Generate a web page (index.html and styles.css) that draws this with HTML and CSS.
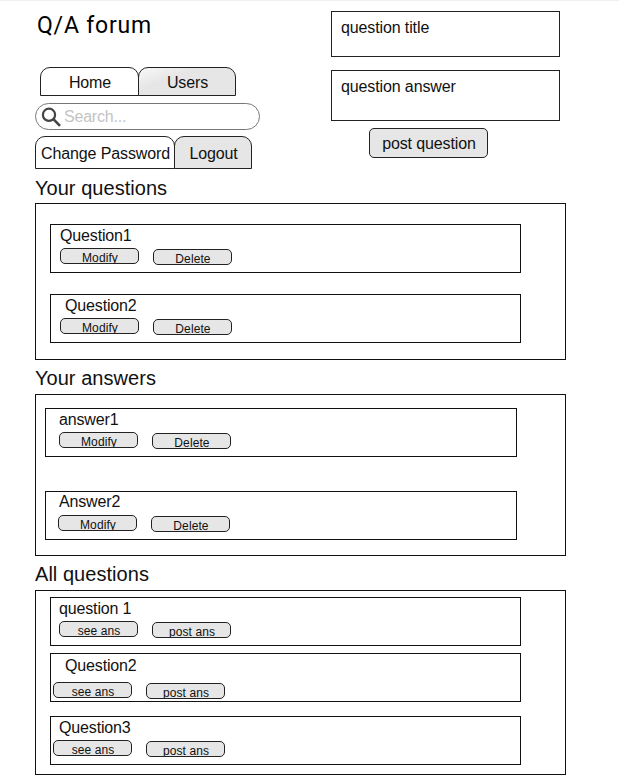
FILE: index.html
```html
<!DOCTYPE html>
<html lang="en">
<head>
<meta charset="utf-8">
<title>Q/A forum</title>
<link rel="stylesheet" href="styles.css">
</head>
<body>
<header class="top">
  <div class="top-left">
    <h1>Q/A forum</h1>
    <nav class="tabs main-tabs">
      <a class="tab">Home</a>
      <a class="tab active shine">Users</a>
    </nav>
    <label class="search">
      <svg width="21" height="21" viewBox="0 0 21 21" fill="none" stroke="#444"><circle cx="8" cy="7.8" r="6.1" stroke-width="2.2"/><path d="M12.4 12.2 19 18.8" stroke-width="2.6"/></svg>
      <span>Search...</span>
    </label>
    <nav class="tabs account-tabs">
      <a class="tab">Change Password</a>
      <a class="tab active">Logout</a>
    </nav>
  </div>
  <form class="ask">
    <div class="field field-title">question title</div>
    <div class="field field-answer">question answer</div>
    <button type="button" class="post">post question</button>
  </form>
</header>
<main>
  <h2>Your questions</h2>
  <section class="panel own-questions">
    <article class="card"><h3>Question1</h3><div class="actions"><button>Modify</button><button>Delete</button></div></article>
    <article class="card indented"><h3>Question2</h3><div class="actions"><button>Modify</button><button>Delete</button></div></article>
  </section>
  <h2>Your answers</h2>
  <section class="panel own-answers">
    <article class="card"><h3>answer1</h3><div class="actions"><button>Modify</button><button>Delete</button></div></article>
    <article class="card second"><h3>Answer2</h3><div class="actions"><button>Modify</button><button>Delete</button></div></article>
  </section>
  <h2>All questions</h2>
  <section class="panel all-questions">
    <article class="card"><h3>question 1</h3><div class="actions"><button>see ans</button><button>post ans</button></div></article>
    <article class="card indented"><h3>Question2</h3><div class="actions"><button>see ans</button><button>post ans</button></div></article>
    <article class="card third"><h3>Question3</h3><div class="actions"><button>see ans</button><button>post ans</button></div></article>
  </section>
</main>
</body>
</html>
```
FILE: styles.css
```css
* { box-sizing: border-box; }
body {
  margin: 0;
  height: 778px;
  overflow: hidden;
  background: #fff;
  border-top: 1px solid #f0f0f0;
  color: #111;
  font: 16px/18px "Liberation Sans", Arial, sans-serif;
  letter-spacing: -0.12px;
}
h1, h2, h3 { margin: 0; font-weight: 400; }
button { font-family: inherit; color: inherit; margin: 0; letter-spacing: inherit; }

.top { display: flex; height: 176px; padding-left: 35px; }
.top-left { width: 296px; }
h1 {
  margin: 11px 0 0 2px;
  height: 27px;
  font: 400 23px/28px Roboto, sans-serif;
  letter-spacing: 0.8px;
  color: #000;
}
.tabs { display: flex; }
.tab {
  display: flex;
  align-items: center;
  justify-content: center;
  border: 1px solid #222;
  border-radius: 10px 10px 0 0;
  white-space: nowrap;
}
.tab + .tab { margin-left: -1px; }
.active { background: #e6e6e6; }
.shine { background: linear-gradient(160deg, #f8f8f8, #e6e6e6 35%); }
.main-tabs { margin: 28px 0 0 5px; height: 29px; }
.main-tabs .tab { width: 99px; padding: 3px 0 0 1px; }
.main-tabs .active { width: 98px; }
.search {
  display: flex;
  margin-top: 7px;
  width: 225px;
  height: 27px;
  padding: 3px 0 0 5px;
  border: 1px solid #777;
  border-radius: 14px;
  color: #c4c4c4;
}
.search span { margin: 1px 0 0 2px; letter-spacing: -0.2px; }
.account-tabs { margin-top: 6px; height: 33px; }
.account-tabs .tab { width: 140px; padding: 3px 0 0 1px; }
.account-tabs .tab.active { width: 78px; }

.ask { width: 229px; }
.field { border: 1px solid #222; padding-left: 9px; }
.field-title { margin-top: 10px; height: 46px; padding-top: 7px; }
.field-answer { margin-top: 13px; height: 51px; padding-top: 7px; }
.post {
  display: block;
  margin: 7px 0 0 38px;
  width: 119px;
  height: 30px;
  padding: 1px 0 0 1px;
  border: 1px solid #222;
  border-radius: 5px;
  background: #e6e6e6;
  font-size: 16px;
}

main { padding-left: 35px; }
h2 { height: 26px; font-size: 20px; line-height: 23px; letter-spacing: 0.04px; }
.panel { width: 531px; border: 1px solid #111; }
.card { width: 471px; height: 49px; border: 1px solid #111; }
.card h3 { font-size: 16px; line-height: 18px; margin: 2px 0 0 9px; letter-spacing: -0.15px; }
.actions { display: flex; gap: 14px; margin: 3px 0 0 9px; }
.actions button {
  width: 79px;
  height: 16px;
  padding: 2px 0 0 1px;
  overflow: hidden;
  border: 1px solid #222;
  border-radius: 5px;
  background: #e6e6e6;
  font-size: 12px;
  line-height: 14px;
  letter-spacing: 0.1px;
}
.actions button + button { position: relative; top: 1px; }

.own-questions { height: 157px; padding: 20px 0 0 14px; }
.own-questions .card + .card { margin-top: 21px; }
.indented h3 { margin-left: 14px; }

.own-questions + h2 { margin-top: 7px; height: 27px; }
.own-answers { height: 162px; padding: 13px 0 0 9px; }
.own-answers .card { width: 472px; }
.own-answers h3 { margin-left: 13px; }
.own-answers .actions { margin-left: 13px; }
.own-answers .second { margin-top: 34px; }
.own-answers .second h3 { margin-top: 1px; }
.own-answers .second .actions { margin: 4px 0 0 12px; }

.own-answers + h2 { margin-top: 7px; height: 27px; }
.all-questions { height: 185px; padding: 6px 0 0 14px; }
.all-questions h3 { margin-left: 8px; }
.all-questions .actions { margin-left: 8px; }
.all-questions .indented { margin-top: 7px; }
.all-questions .indented h3 { margin: 3px 0 0 14px; }
.all-questions .indented .actions { margin: 7px 0 0 2px; }
.all-questions .third { margin-top: 14px; }
.all-questions .third .actions { margin-left: 2px; }
```
